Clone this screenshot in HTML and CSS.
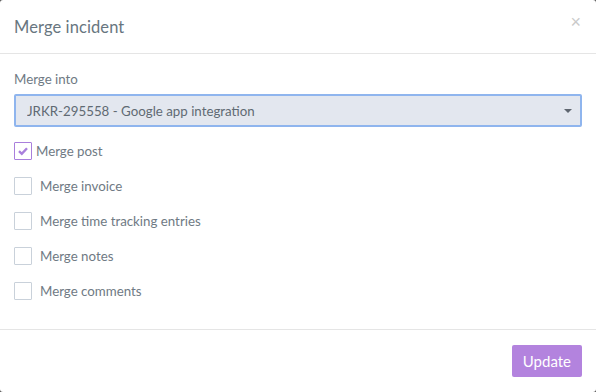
FILE: index.html
```html
<!DOCTYPE html>
<html lang="en">
<head>
  <meta charset="UTF-8" />
  <title>Merge incident</title>
  <link rel="stylesheet" href="styles.css">
</head>
<body>

<div class="modal">
  <div class="modal-header">
    <h1 class="modal-title">Merge incident</h1>
    <button class="close" type="button">&times;</button>
  </div>

  <form class="modal-body" id="mergeForm">
    <label class="field-label" for="merge_into">Merge into</label>
    <div class="select-wrap">
      <select id="merge_into" name="merge_into">
        <option value="JRKR-295558">JRKR-295558 - Google app integration</option>
      </select>
      <span class="caret"></span>
    </div>

    <div class="checks">
      <label class="check checked">
        <input type="checkbox" name="merge_post" checked>
        <span class="box">
          <svg width="12" height="12" viewBox="0 0 12 12"><path d="M2 6.2 L4.8 8.8 L10 3.2" fill="none" stroke="#a97fdc" stroke-width="2.4"/></svg>
        </span>
        <span class="text">Merge post</span>
      </label>
      <label class="check">
        <input type="checkbox" name="merge_invoice">
        <span class="box"></span>
        <span class="text">Merge invoice</span>
      </label>
      <label class="check">
        <input type="checkbox" name="merge_time">
        <span class="box"></span>
        <span class="text">Merge time tracking entries</span>
      </label>
      <label class="check">
        <input type="checkbox" name="merge_notes">
        <span class="box"></span>
        <span class="text">Merge notes</span>
      </label>
      <label class="check">
        <input type="checkbox" name="merge_comments">
        <span class="box"></span>
        <span class="text">Merge comments</span>
      </label>
    </div>
  </form>

  <div class="modal-footer">
    <button class="btn-primary" type="submit" form="mergeForm">Update</button>
  </div>
</div>

</body>
</html>
```

FILE: styles.css
```css
html, body { height: 100%; }
body {
  margin: 0; background: #555;
  font-family: Lato, "Open Sans", sans-serif;
}
.modal {
  height: 100%; background: #fff; border-radius: 3px;
  display: flex; flex-direction: column;
}
.modal-header {
  height: 54px; box-sizing: border-box; border-bottom: 1px solid #e5e5e5;
  display: flex; align-items: center; justify-content: space-between;
  padding: 0 14px;
}
.modal-title {
  margin: 0; font-size: 16.5px; font-weight: normal; color: #687680;
  letter-spacing: 0.1px;
}
.close {
  background: none; border: none; padding: 0; margin-top: -8px; margin-right: 1px;
  font-size: 18px; color: #cacaca; cursor: pointer; font-family: Arial, sans-serif;
}
.modal-body {
  flex: 1; padding: 17px 14px 0; margin: 0;
}
.field-label {
  display: block; font-size: 13.3px; color: #6f7a84; margin-bottom: 7px;
}
.select-wrap { position: relative; }
select {
  width: 100%; height: 33px; box-sizing: border-box;
  background: #e3e7ef; border: 2px solid #8fb5ee; border-radius: 2px;
  padding: 0 11px; font-family: inherit; font-size: 13.3px; color: #606a73;
  appearance: none; -webkit-appearance: none; outline: none;
}
.caret {
  position: absolute; right: 10px; top: 15px;
  border-left: 4px solid transparent; border-right: 4px solid transparent;
  border-top: 4px solid #5f6670;
}
.checks { margin-top: 6px; }
.check {
  display: flex; align-items: center; height: 35px; cursor: pointer;
  font-size: 13.3px; color: #6f7a84;
}
.check input { display: none; }
.box {
  width: 18px; height: 18px; box-sizing: border-box;
  border: 1px solid #c9d1da; border-radius: 1px; margin-right: 8px;
  display: flex; align-items: center; justify-content: center;
}
.check.checked .box { border-color: #a97fdc; margin-right: 4px; }
.modal-footer {
  height: 62px; border-top: 1px solid #e5e5e5;
  display: flex; align-items: center; justify-content: flex-end;
  padding: 0 14px;
}
.btn-primary {
  background: #b383de; color: #fff; border: none; border-radius: 2px;
  height: 32px; padding: 0 11px; font-family: inherit; font-size: 15px; cursor: pointer;
}
```
